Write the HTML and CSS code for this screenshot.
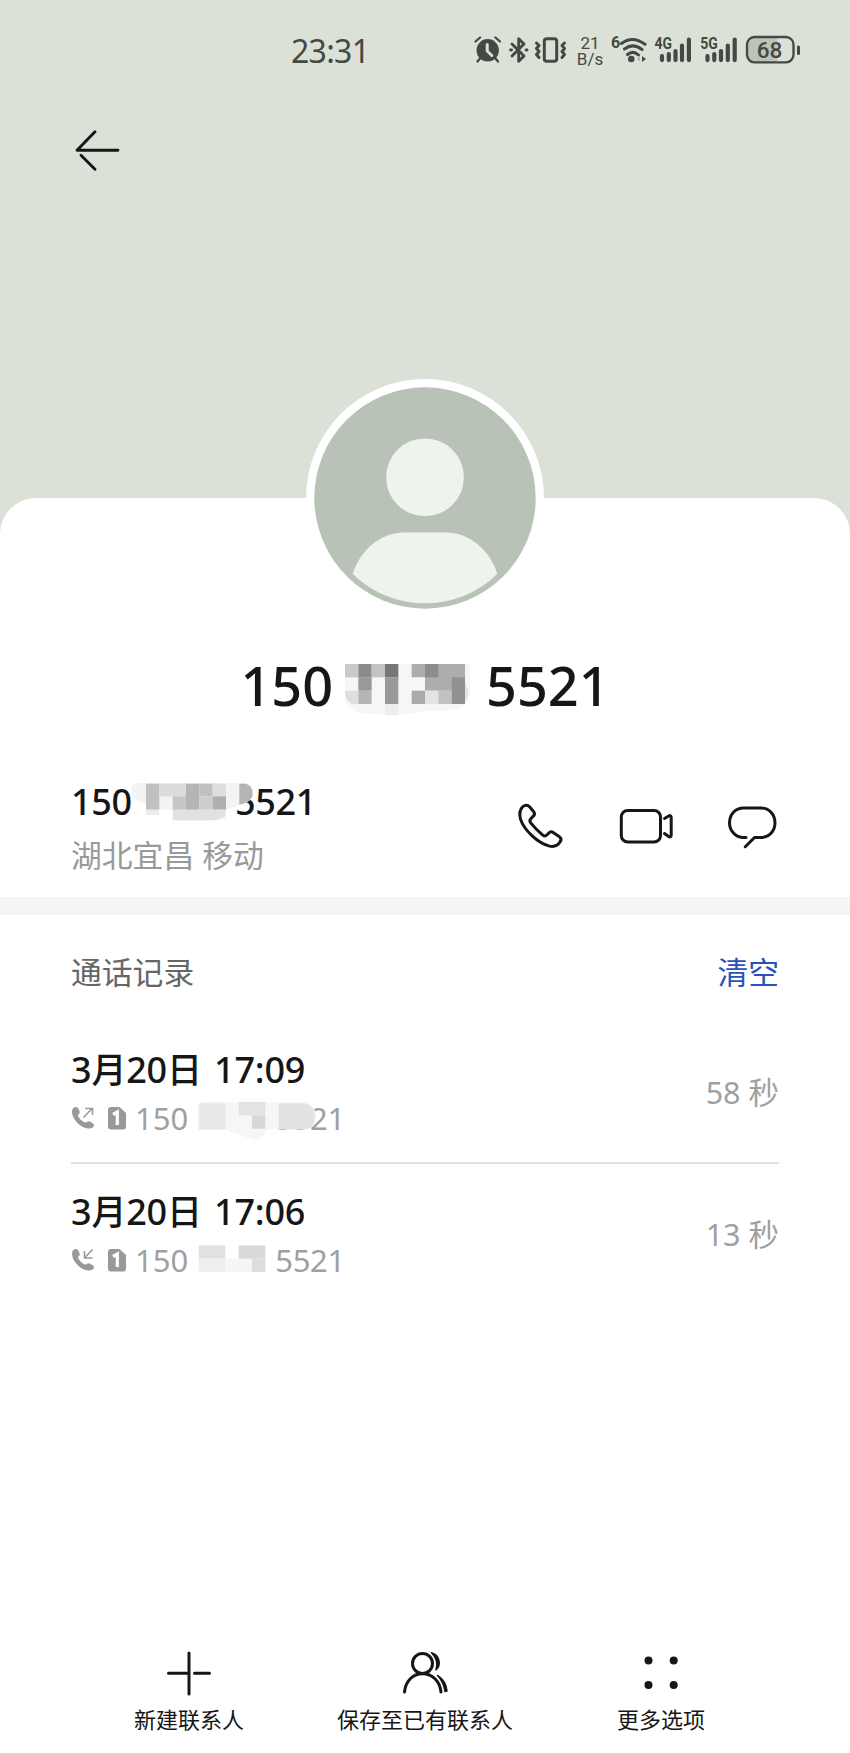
FILE: index.html
```html
<!DOCTYPE html>
<html lang="zh-CN">
<head>
<meta charset="utf-8">
<title>联系人</title>
<link rel="stylesheet" href="styles.css">
</head>
<body>
<div class="page">
  <header class="status">
    <span class="time">23:31</span>
    <svg width="36" height="32" viewBox="470 34 36 32"><circle cx="487.700" cy="50.300" r="11.200" class="solid"/><path d="M475.500 41.500l4.600-4M500 41.500l-4.600-4M480 58.500l-2.500 3M495.500 58.500l2.500 3" class="line w2"/><path d="M487.200 44.500v6.500l4.600 4.500" class="cut"/></svg>
    <svg width="26" height="32" viewBox="506 34 26 32"><path d="M512 44l12 12-5.300 5.200v-22.400l5.300 5.200-12 12" class="line w28"/><path d="M510.500 50h1M526 50h1" class="line w28"/></svg>
    <svg width="42" height="32" viewBox="532 34 42 32"><rect x="544.300" y="38.800" width="12.400" height="22.400" rx="2.500" class="line w3"/><path d="M536.500 43l2.500 2.500-2.500 3 2.500 3-2.500 3 2.500 3M564.500 43l-2.500 2.500 2.500 3-2.500 3 2.500 3-2.500 3" class="line w3"/></svg>
    <div class="speed"><span>21</span><span>B/s</span></div>
    <svg width="42" height="32" viewBox="610 34 42 32"><text x="611" y="48" class="net">6</text><path d="M621.500 43.500q11-8.500 23.500.8M624.500 49q8.500-6.500 17.500.5M627.500 54.500q5.500-4.500 11 .5" class="line w3"/><circle cx="631.300" cy="59" r="3.300" class="solid"/><path d="M640 56.500v5l-3-2.500z" fill="#aeb4aa"/><path d="M642 56v6l4-3z" class="solid"/></svg>
    <svg width="44" height="32" viewBox="652 34 44 32"><text x="654.500" y="49" class="net" textLength="17.500" lengthAdjust="spacingAndGlyphs">4G</text><path d="M662 56.200v3.900M668.800 54v6.100M675.500 51v9.100M682 45.500v14.600M688.900 39.500v20.600" class="line w4"/></svg>
    <svg width="46" height="32" viewBox="696 34 46 32"><text x="700.300" y="49" class="net" textLength="17.500" lengthAdjust="spacingAndGlyphs">5G</text><path d="M707.500 56.200v3.900M714.300 54v6.100M721 51v9.100M727.800 45.500v14.600M734.700 39.500v20.600" class="line w4"/></svg>
    <svg width="62" height="32" viewBox="742 34 62 32"><path d="M755 37h22v25h-22a8 8 0 0 1-8-8v-9a8 8 0 0 1 8-8z" fill="#bdc3b9"/><rect x="747" y="37" width="46.500" height="25.300" rx="7.500" class="line w2"/><path d="M798.500 47v6.500" class="line w3"/><text x="769.500" y="57.800" text-anchor="middle" class="batt">68</text></svg>
  </header>

  <nav class="nav">
    <svg width="52" height="48" viewBox="72 126 52 48" class="ink w28"><path d="M95 131.800L77 150.300h41M81 155.200L95 169.300"/></svg>
  </nav>

  <main class="card">
    <svg class="avatar" width="238" height="238" viewBox="306 379 238 238"><circle cx="425" cy="498" r="119" fill="#fff"/><circle cx="425" cy="498" r="110.700" fill="#b9c2b6"/><circle cx="425" cy="477.300" r="38.900" fill="#eef3ee"/><path d="M352.700 574C360 550 381 532.600 404 532.600h42C469 532.600 490 550 497.300 574A103.800 103.800 0 0 1 352.700 574z" fill="#eef3ee"/></svg>

    <h1 class="title">
      <span>150</span>
      <svg class="mask-title" width="153" height="56" viewBox="340 60 459 168">
        <path d="M376 72h374v60q8 40-22 70l-40 10h-72l-80 14-110-6q-50-8-50-60z" fill="#f6f6f6"/>
        <path d="M376 72h40v40h-40z" fill="#c9c9c9"/><path d="M416 72h40v40h-40z" fill="#8b8b8b"/><path d="M456 72h40v40h-40z" fill="#c3c3c3"/><path d="M496 72h40v40h-40z" fill="#777"/>
        <path d="M416 112h40v40h-40zM496 112h40v80h-40z" fill="#999"/><path d="M376 152h40v40h-20q-16-10-20-26z" fill="#dedede"/><path d="M416 152h40v40h-40z" fill="#b5b5b5"/><path d="M496 192h40v34h-40z" fill="#ededed"/>
        <path d="M576 72h160v80h-120v-40h-40z" fill="#adadad"/><path d="M616 72h40v40h-40z" fill="#8c8c8c"/><path d="M576 152h40v40h-40z" fill="#aaa"/><path d="M616 152h40v40h-40z" fill="#e3e3e3"/><path d="M656 152h40v40h-40z" fill="#c2c2c2"/><path d="M696 112h40v80h-40z" fill="#929292"/><path d="M736 130q20 32 0 56z" fill="#e2e2e2"/>
      </svg>
      <span>5521</span>
    </h1>

    <section class="contact">
      <div>
        <div class="number"><span>150</span><span class="n2">5521</span>
          <svg class="mask-number" width="122" height="38" viewBox="243 70 366 114">
            <path d="M243 84q6-14 22-14h322q22 6 22 30 0 26-40 36l-42 14v28l-50 6h-108v-34h-80v-20q-46-4-46-46z" fill="#f3f3f3"/>
            <path d="M288 72h40v78h-40z" fill="#c1c1c1"/><path d="M288 150h40v16h-40z" fill="#ececec"/><path d="M328 72h80v38h-80z" fill="#dcdcdc"/><path d="M408 72h40v78h-40z" fill="#b5b5b5"/><path d="M448 72h40v38h-40z" fill="#c0c0c0"/><path d="M488 72h40v38h-40z" fill="#dedede"/><path d="M368 110h40v40h-40z" fill="#c7c7c7"/><path d="M448 110h40v40h-40z" fill="#cdcdcd"/><path d="M488 110h40v40h-40z" fill="#afafaf"/><path d="M368 150h158v20l-28 11h-130z" fill="#e1e1e1"/><path d="M568 72h20q20 6 20 30t-40 33z" fill="#b5b5b5"/>
          </svg>
        </div>
        <div class="place">湖北宜昌 移动</div>
      </div>
      <div class="actions ink w3">
        <svg width="50" height="56" viewBox="515 800 50 56"><path d="M522.800 806.600q3.900-2.800 7 .5l3.700 4.300q2 2.500.1 4.500l-2.800 2.900q-1.800 2-.1 4.100 5.600 7 12 12.200 2.300 1.800 4.200-.1l1.900-2q1.800-2 4.300-.6l6 4q3.200 2.300 1 5.500-3.800 5.700-10.500 4.200c-12-3-25.500-16-29.100-27q-2.200-8 2.300-12.500z"/></svg>
        <svg width="58" height="56" viewBox="616 800 58 56"><rect x="621.300" y="810.500" width="39.200" height="31.500" rx="6.500"/><path d="M664.500 818.500l4.200-2.500c1.500-.8 2.500-.3 2.500 1.500v17.500c0 1.900-1 2.400-2.500 1.500l-4.200-3"/></svg>
        <svg width="54" height="56" viewBox="726 800 54 56"><path d="M747 837.500h-3.500a14 14.800 0 0 1-13-14.800c0-8.500 6-14.700 14-14.700h17.500c8 0 14 6.200 14 14.700s-6 14.800-14 14.800h-6.500l-9.200 9.200"/></svg>
      </div>
    </section>

    <section class="history">
      <div class="heading"><h2>通话记录</h2><a class="clear">清空</a></div>

      <article class="record">
        <div>
          <div class="date">3<b>月</b>20<b>日</b> <span>17:09</span></div>
          <div class="meta">
            <svg width="24" height="26" viewBox="72 1105 24 26"><path d="M75.500 1107.300q2.500-1 3.800 1.200l1.300 3c.6 2-.8 2.600-1.900 3.800 1.300 3.300 4.300 6 7.800 7.500 1.200-1 2.500-2 4.200-1.200l3.300 1.800c1.500 1.200 1.300 2.600 0 3.800-6.500 4.800-19.800-4.700-20.900-14.300-.2-3 .4-4.800 2.400-5.600z" fill="#999"/><path d="M84.500 1117.500l8-8.500M86 1108.500h7.500v6.500" class="mini"/></svg>
            <svg class="sim" width="18" height="24" viewBox="0 0 18 24"><path d="M3 1h8.500L18 7v13.500q0 3-3 3H3q-3 0-3-3V4q0-3 3-3z" fill="#999"/><path d="M5 8.500l4.300-2.500V19" class="one"/></svg>
            <span>150</span><span class="n3">5521</span>
            <svg class="mask-call" width="118" height="39" viewBox="446 516 354 117"><path d="M446 530q2-14 18-14h300q36 10 36 44t-32 38H656l-30 34-80-24-8-8H446z" fill="#f6f6f6"/><path d="M450 520h78v78h-78z" fill="#e8e8e8"/><path d="M568 516h80v40h-80z" fill="#e3e3e3"/><path d="M608 556h40v40h-40z" fill="#d8d8d8"/><path d="M688 520h76q36 10 32 42-2 36-30 36h-78z" fill="#e2e2e2"/></svg>
          </div>
        </div>
        <div class="duration">58 秒</div>
      </article>

      <article class="record">
        <div>
          <div class="date">3<b>月</b>20<b>日</b> <span>17:06</span></div>
          <div class="meta">
            <svg width="24" height="26" viewBox="72 1105 24 26"><path d="M75.500 1107.300q2.500-1 3.800 1.200l1.300 3c.6 2-.8 2.600-1.900 3.800 1.300 3.300 4.300 6 7.800 7.500 1.200-1 2.500-2 4.200-1.200l3.300 1.800c1.500 1.200 1.300 2.600 0 3.800-6.500 4.800-19.800-4.700-20.900-14.300-.2-3 .4-4.800 2.400-5.600z" fill="#999"/><path d="M93.500 1107.500l-8 8.500M85.500 1109v7h8" class="mini"/></svg>
            <svg class="sim" width="18" height="24" viewBox="0 0 18 24"><path d="M3 1h8.500L18 7v13.500q0 3-3 3H3q-3 0-3-3V4q0-3 3-3z" fill="#999"/><path d="M5 8.500l4.300-2.500V19" class="one"/></svg>
            <span>150</span><span class="n3">5521</span>
            <svg class="mask-call" width="68" height="39" viewBox="446 290 204 117"><path d="M448 294h80v40h-80z" fill="#e1e1e1"/><path d="M448 334h80v40h-80z" fill="#eee"/><path d="M528 334h80v40h-80z" fill="#f5f5f5"/><path d="M568 294h80v40h-80z" fill="#d9d9d9"/><path d="M608 334h40v40h-40z" fill="#ddd"/></svg>
          </div>
        </div>
        <div class="duration">13 秒</div>
      </article>
    </section>

    <footer class="toolbar">
      <div class="tool"><svg width="48" height="48" viewBox="165 1649 48 48" class="ink w3"><path d="M189 1653v41M168.500 1673.300H187M194.500 1673.300H209.500"/></svg><span>新建联系人</span></div>
      <div class="tool"><svg width="48" height="48" viewBox="401 1649 48 48" class="ink w3"><circle cx="422.500" cy="1663.500" r="10"/><path d="M404.500 1692c1-11 8.500-18.300 18-18.300s17.500 7.300 18.500 18.300"/><path d="M431.500 1652.800c8.500 2.500 10 12.500 4.500 17q3-9.500-4.500-17zM437.500 1675.500q8.500 5.500 9.500 15.500l-2 .5q-1.500-10-7.500-16z" fill="#161616" stroke-width="1.500"/></svg><span>保存至已有联系人</span></div>
      <div class="tool"><svg width="48" height="48" viewBox="637 1649 48 48"><g fill="#161616"><circle cx="648.500" cy="1660.500" r="4"/><circle cx="673.700" cy="1660.500" r="4"/><circle cx="648.500" cy="1685" r="4"/><circle cx="673.700" cy="1685" r="4"/></g></svg><span>更多选项</span></div>
    </footer>
  </main>
</div>
</body>
</html>
```
FILE: styles.css
```css
* { box-sizing: border-box; }
body { margin: 0; font-family: "Noto Sans", "Noto Sans CJK SC", sans-serif; color: #161616; }
svg { display: block; flex: none; }
h1, h2 { margin: 0; font-weight: 500; }
.page { width: 850px; height: 1753px; display: flex; flex-direction: column; background: #dbe1d6; }

.status { height: 100px; display: flex; align-items: center; padding-left: 291px; color: #434943; }
.time { width: 179px; margin-top: 2px; font-size: 32px; line-height: 40px; letter-spacing: -0.7px; font-weight: 450; }
.solid { fill: #434943; }
.line { fill: none; stroke: #434943; stroke-linecap: round; stroke-linejoin: round; }
.cut { fill: none; stroke: #dbe1d6; stroke-width: 3; stroke-linecap: round; stroke-linejoin: round; }
.w2 { stroke-width: 2.3; }
.w28 { stroke-width: 2.9; }
.w3 { stroke-width: 3; }
.w4 { stroke-width: 4.2; }
.speed { width: 36px; display: flex; flex-direction: column; align-items: center; padding: 2px 4px 0 0; font: 17px/16px Roboto, sans-serif; }
.net { font: 700 16px Roboto, sans-serif; fill: #434943; }
.batt { font: 500 22.500px Roboto, sans-serif; fill: #434943; }

.nav { height: 100px; display: flex; align-items: center; padding-left: 72px; }
.ink { fill: none; stroke: #161616; stroke-linecap: round; stroke-linejoin: round; }

.card { flex: 1; margin-top: 298px; background: #fff; border-radius: 36px 36px 0 0; display: flex; flex-direction: column; }
.avatar { margin: -119px auto 0; }
.title { margin-top: 38px; display: flex; justify-content: center; font-size: 54px; line-height: 60px; }
.mask-title { margin-top: 5px; }

.contact { height: 181px; padding: 66px 71px 0; display: flex; justify-content: space-between; }
.number { position: relative; display: flex; height: 40px; font-size: 36px; line-height: 40px; letter-spacing: -0.3px; font-weight: 500; }
.n2 { margin-left: 103px; }
.mask-number { position: absolute; left: 60px; top: 1px; }
.place { margin-top: 13px; font-size: 30.800px; line-height: 40px; color: #999; }
.actions { display: flex; align-items: center; height: 92px; }
.actions svg + svg { margin-left: 51px; }

.history { border-top: 18px solid #f5f5f5; padding: 37px 71px 0; }
.heading { display: flex; justify-content: space-between; line-height: 40px; font-size: 30.800px; }
.heading h2 { font-size: inherit; font-weight: 400; color: #666; }
.clear { color: #2853bd; }
.record { height: 142px; display: flex; justify-content: space-between; padding-top: 28px; border-bottom: 2px solid #e2e2e2; }
.heading + .record { margin-top: 30px; }
.record:last-child { border: 0; }
.date { height: 40px; font-size: 36px; line-height: 40px; letter-spacing: -0.2px; font-weight: 500; }
.date b { font-size: 35px; font-weight: 500; }
.date span { margin-left: 3px; }
.meta { position: relative; display: flex; align-items: center; margin-top: 10px; height: 36px; font-size: 31px; line-height: 36px; color: #a0a0a0; }
.sim { margin: 0 9px 0 13px; }
.one { fill: none; stroke: #fff; stroke-width: 3.200; }
.n3 { margin-left: 87px; letter-spacing: -0.300px; }
.mask-call { position: absolute; left: 127px; top: 2px; }
.mini { fill: none; stroke: #999; stroke-width: 1.600; }
.duration { height: 84px; line-height: 84px; font-size: 30.500px; color: #a0a0a0; }

.toolbar { margin-top: auto; padding: 0 71px 20px; display: flex; }
.tool { width: 236px; display: flex; flex-direction: column; align-items: center; gap: 8px; font-size: 22px; line-height: 28px; white-space: nowrap; }
```
